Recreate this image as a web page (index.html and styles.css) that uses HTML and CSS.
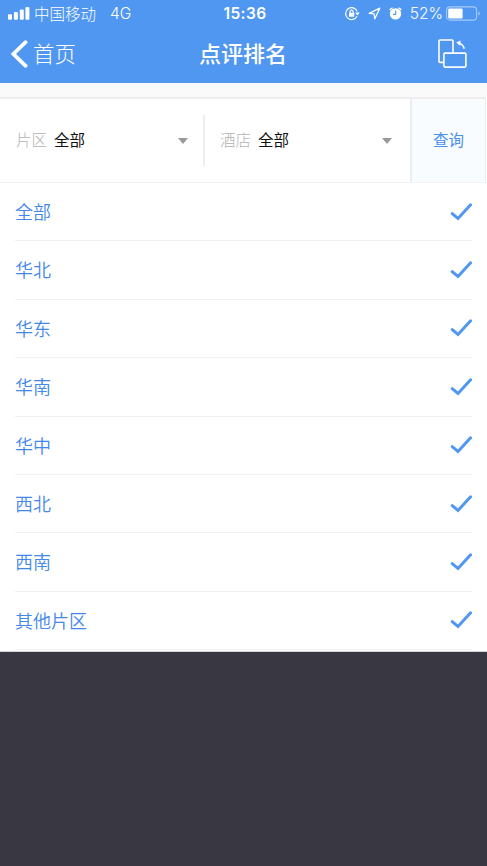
FILE: index.html
```html
<!DOCTYPE html>
<html lang="zh-CN">
<head>
<meta charset="utf-8">
<meta name="viewport" content="width=device-width, initial-scale=1">
<title>点评排名</title>
<link rel="stylesheet" href="styles.css">
</head>
<body>
<svg class="defs" width="0" height="0" aria-hidden="true">
  <symbol id="check" viewBox="0 0 22 18"><path d="M2.2 10.6 8 15.4 20.6 1.8" fill="none" stroke="#4f97f1" stroke-width="3" stroke-linecap="round"/></symbol>
</svg>
<header class="header">
  <div class="status">
    <div class="status-left">
      <svg class="signal" width="22" height="14" viewBox="0 0 22 14" fill="#fff"><rect x="0" y="7.3" width="4" height="5.5" rx="1"/><rect x="5.9" y="5" width="4" height="7.8" rx="1"/><rect x="11.8" y="2.5" width="4" height="10.3" rx="1"/><rect x="17.4" y="0" width="4" height="12.8" rx="1"/></svg>
      <span class="carrier">中国移动</span>
      <span class="network">4G</span>
    </div>
    <span class="clock">15:36</span>
    <div class="status-right">
      <svg width="15" height="14" viewBox="0 0 15 14" fill="none" stroke="#fff" stroke-width="1.2"><path d="M12 9.2A6 6 0 1 1 12.2 4.4"/><path d="M10 5.4h4.8l-2.4 3z" fill="#fff" stroke="none"/><rect x="4" y="5.8" width="5.2" height="4" rx=".5" fill="#fff" stroke="none"/><path d="M5.1 6V4.6a1.5 1.5 0 0 1 3 0V6"/></svg>
      <svg class="locate" width="13" height="13" viewBox="0 0 13 13" fill="none" stroke="#fff" stroke-width="1.3" stroke-linejoin="round"><path d="M1.2 6.3 11.8 1.2 6.8 11.8 6.1 6.9z"/></svg>
      <svg class="alarm" width="13" height="14" viewBox="0 0 13 14"><circle cx="6.5" cy="6.9" r="5.7" fill="#fff"/><path d="M.7 3.2A6 6 0 0 1 3.6 .8M9.4 .8a6 6 0 0 1 2.9 2.4" stroke="#fff" stroke-width="1.4" fill="none"/><path d="M6.7 3.6v3.8H4" stroke="#4f97f1" stroke-width="1.1" fill="none"/></svg>
      <span class="percent">52%</span>
      <svg class="battery" width="35" height="15" viewBox="0 0 35 15"><rect x=".6" y=".9" width="30" height="13.2" rx="3.4" fill="none" stroke="#a7cbf8" stroke-width="1.1"/><rect x="2.2" y="2.6" width="14.4" height="9.8" rx="1.2" fill="#fff"/><path d="M32.4 5.2q3 2.3 0 4.6z" fill="#a7cbf8"/></svg>
    </div>
  </div>
  <nav class="nav">
    <a class="back"><svg width="18" height="28" viewBox="0 0 18 28"><path d="M15.6 2.2 3.4 14 15.6 25.8" fill="none" stroke="#fff" stroke-width="3.8" stroke-linecap="round"/></svg><span>首页</span></a>
    <h1>点评排名</h1>
    <svg class="rotate" width="30" height="30" viewBox="0 0 30 30" fill="none" stroke="#fff" stroke-width="1.6"><path d="M6.5 23.4H3a1 1 0 0 1-1-1V2a1 1 0 0 1 1-1H15a1 1 0 0 1 1 1V14"/><rect x="6.9" y="14.1" width="22" height="14" rx="1"/><path d="M21.8 4.3q4.2.7 5.5 5.5" stroke-width="1.5"/><path d="m19.2 3.5 4.5-2-.6 5.2z" fill="#fff" stroke="none"/></svg>
  </nav>
</header>
<section class="filters">
  <div class="filter first"><span class="label">片区</span><span class="value">全部</span><i class="caret"></i></div>
  <div class="filter second"><span class="label">酒店</span><span class="value">全部</span><i class="caret"></i></div>
  <a class="query">查询</a>
</section>
<ul class="list">
  <li><span>全部</span><svg><use href="#check"/></svg></li>
  <li><span>华北</span><svg><use href="#check"/></svg></li>
  <li><span>华东</span><svg><use href="#check"/></svg></li>
  <li><span>华南</span><svg><use href="#check"/></svg></li>
  <li><span>华中</span><svg><use href="#check"/></svg></li>
  <li><span>西北</span><svg><use href="#check"/></svg></li>
  <li><span>西南</span><svg><use href="#check"/></svg></li>
  <li><span>其他片区</span><svg><use href="#check"/></svg></li>
</ul>
</body>
</html>
```
FILE: styles.css
```css
* { box-sizing: border-box; }
html, body { height: 100%; }
body {
  margin: 0;
  overflow: hidden;
  background: #393842;
  font-family: Inter, "Noto Sans CJK SC", sans-serif;
  font-weight: 400;
}
svg { display: block; flex: none; }
.defs { position: absolute; }
.header { height: 83px; background: #4f97f1; color: #fff; }
.status {
  display: grid;
  grid-template-columns: 1fr auto 1fr;
  align-items: center;
  height: 27px;
  padding: 0 6px 0 8px;
  font-size: 15.5px;
  line-height: 27px;
}
.status-left, .status-right { display: flex; align-items: center; white-space: nowrap; }
.status-right { justify-content: flex-end; }
.carrier { margin-left: 4px; font-weight: 300; font-family: "Noto Sans CJK SC", sans-serif; }
.network { margin-left: 14px; font-weight: 300; }
.clock { margin-left: 1px; font-size: 15.5px; font-weight: 600; letter-spacing: .4px; }
.locate { margin-left: 8px; }
.alarm { margin-left: 8px; }
.percent { margin-left: 8px; font-weight: 300; }
.battery { margin-left: 3px; }
.nav {
  display: grid;
  grid-template-columns: 1fr auto 1fr;
  align-items: center;
  height: 56px;
  padding: 0 20px 2px 10px;
}
.back { display: flex; align-items: center; height: 54px; font-size: 21.5px; font-weight: 300; line-height: 54px; }
.back span { margin-left: 5px; }
.nav h1 { height: 54px; margin: 0; padding-left: 9px; font-size: 22px; font-weight: 500; line-height: 55px; }
.rotate { justify-self: end; }
.filters {
  display: flex;
  height: 100px;
  padding-right: 1px;
  border-top: 14px solid #fafafa;
  border-bottom: 1px solid #f2f2f2;
  background: #fff;
  font-size: 15.5px;
}
.filter, .query { display: flex; align-items: center; padding-bottom: 3px; border-top: 2px solid #eee; }
.filter.first { width: 204px; padding: 0 16.5px 3px 16px; }
.filter.second { position: relative; width: 206px; padding: 0 18px 3px 16px; }
.filter.second::before {
  content: "";
  position: absolute;
  left: -1px;
  top: 16px;
  width: 2px;
  height: 51px;
  background: #eee;
}
.label { color: #b2b2b2; font-weight: 300; }
.value { margin-left: 7px; color: #111; }
.caret {
  margin: 3px 0 0 auto;
  border: 5.5px solid transparent;
  border-top: 6.5px solid #999;
  border-bottom: 0;
}
.query {
  flex: 1;
  justify-content: center;
  border-left: 2px solid #ebeef0;
  border-right: 1px solid #e9edf0;
  background: #f9fcff;
  color: #4a90ec;
}
.list {
  height: 469px;
  margin: 0;
  padding: 0 15px 1px;
  border-bottom: 1px solid #d5d5d7;
  background: #fff;
  list-style: none;
}
.list li {
  display: flex;
  justify-content: space-between;
  align-items: center;
  height: 58.4px;
  border-bottom: 1px solid #f1f1f1;
  color: #4288e8;
  font-size: 18px;
  font-weight: 350;
}
.list span { padding-bottom: 1.5px; }
.list svg { width: 22px; height: 18px; }
```
